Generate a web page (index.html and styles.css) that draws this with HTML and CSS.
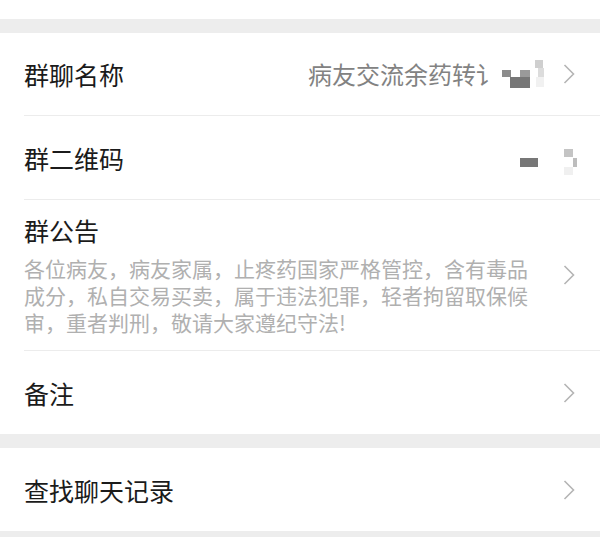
FILE: index.html
```html
<!DOCTYPE html>
<html lang="zh-CN">
<head>
  <meta charset="UTF-8" />
  <meta name="viewport" content="width=device-width, initial-scale=1.0">
  <title>聊天信息</title>
  <link rel="stylesheet" href="styles.css">
</head>
<body>
  <div class="top-strip"></div>
  <div class="gap"></div>

  <section class="group">
    <div class="cell first">
      <span class="label">群聊名称</span>
      <div class="right">
        <span class="value">病友交流余药转讠</span>
        <svg class="mosaic" width="48" height="34" viewBox="0 0 48 34">
          <rect x="2" y="13" width="9" height="7" fill="#8c8c8c"/>
          <rect x="20" y="13" width="10" height="7" fill="#9a9a9a"/>
          <rect x="10" y="20" width="20" height="11" fill="#777"/>
          <rect x="35" y="3" width="8" height="8" fill="#cfcfcf"/>
          <rect x="38" y="11" width="6" height="9" fill="#dcdcdc"/>
          <rect x="36" y="20" width="8" height="10" fill="#f1f1f1"/>
        </svg>
        <svg class="arrow" width="14" height="22" viewBox="0 0 14 22"><path d="M2.5 2 L11.5 11 L2.5 20" /></svg>
      </div>
    </div>

    <div class="cell">
      <span class="label">群二维码</span>
      <div class="right">
        <svg class="mosaic qr" width="60" height="34" viewBox="0 0 60 34">
          <rect x="3" y="17" width="18" height="9" fill="#777"/>
          <rect x="47" y="8" width="9" height="8" fill="#c4c4c4"/>
          <rect x="56" y="17" width="4" height="9" fill="#bdbdbd"/>
          <rect x="47" y="26" width="9" height="8" fill="#f0f0f0"/>
        </svg>
      </div>
    </div>

    <div class="cell notice">
      <div class="notice-body">
        <span class="label">群公告</span>
        <p class="notice-text">各位病友，病友家属，止疼药国家严格管控，含有毒品成分，私自交易买卖，属于违法犯罪，轻者拘留取保候审，重者判刑，敬请大家遵纪守法!</p>
      </div>
      <svg class="arrow" width="14" height="22" viewBox="0 0 14 22"><path d="M2.5 2 L11.5 11 L2.5 20" /></svg>
    </div>

    <div class="cell">
      <span class="label">备注</span>
      <svg class="arrow" width="14" height="22" viewBox="0 0 14 22"><path d="M2.5 2 L11.5 11 L2.5 20" /></svg>
    </div>
  </section>

  <div class="gap"></div>

  <section class="group">
    <div class="cell">
      <span class="label">查找聊天记录</span>
      <svg class="arrow" width="14" height="22" viewBox="0 0 14 22"><path d="M2.5 2 L11.5 11 L2.5 20" /></svg>
    </div>
  </section>

  <div class="gap"></div>
</body>
</html>
```

FILE: styles.css
```css
:root {
  --bg-gray: #ededed;
  --line: #ececec;
  --text-main: #1b1b1b;
  --text-value: #828282;
  --text-muted: #b0b0b0;
  --arrow: #b5b5b5;
}
html, body {
  margin: 0;
  padding: 0;
  background: var(--bg-gray);
  font-family: "Noto Sans CJK SC", "Noto Sans", sans-serif;
  color: var(--text-main);
}
.top-strip {
  height: 19px;
  background: #fff;
}
.gap {
  height: 14px;
  background: var(--bg-gray);
}
.group {
  background: #fff;
  padding-left: 24px;
}
.cell {
  display: flex;
  align-items: center;
  justify-content: space-between;
  height: 83px;
  padding-right: 24px;
  border-bottom: 1px solid var(--line);
}
.cell.first {
  height: 82px;
}
.group .cell:last-child {
  border-bottom: none;
}
.label {
  font-size: 25px;
  line-height: 32px;
}
.right {
  display: flex;
  align-items: center;
}
.value {
  white-space: nowrap;
  font-size: 24px;
  line-height: 32px;
  color: var(--text-value);
}
.mosaic {
  display: block;
  margin-right: 14px;
}
.mosaic.qr {
  margin: 0 -1px 0 0;
}
.arrow {
  display: block;
  flex-shrink: 0;
}
.arrow path {
  fill: none;
  stroke: var(--arrow);
  stroke-width: 1.6;
}
.notice {
  height: auto;
  padding-top: 14px;
  padding-bottom: 14px;
}
.notice-body {
  display: flex;
  flex-direction: column;
  gap: 9px;
}
.notice-text {
  margin: 0;
  width: 508px;
  font-size: 21px;
  line-height: 27px;
  color: var(--text-muted);
}
```
